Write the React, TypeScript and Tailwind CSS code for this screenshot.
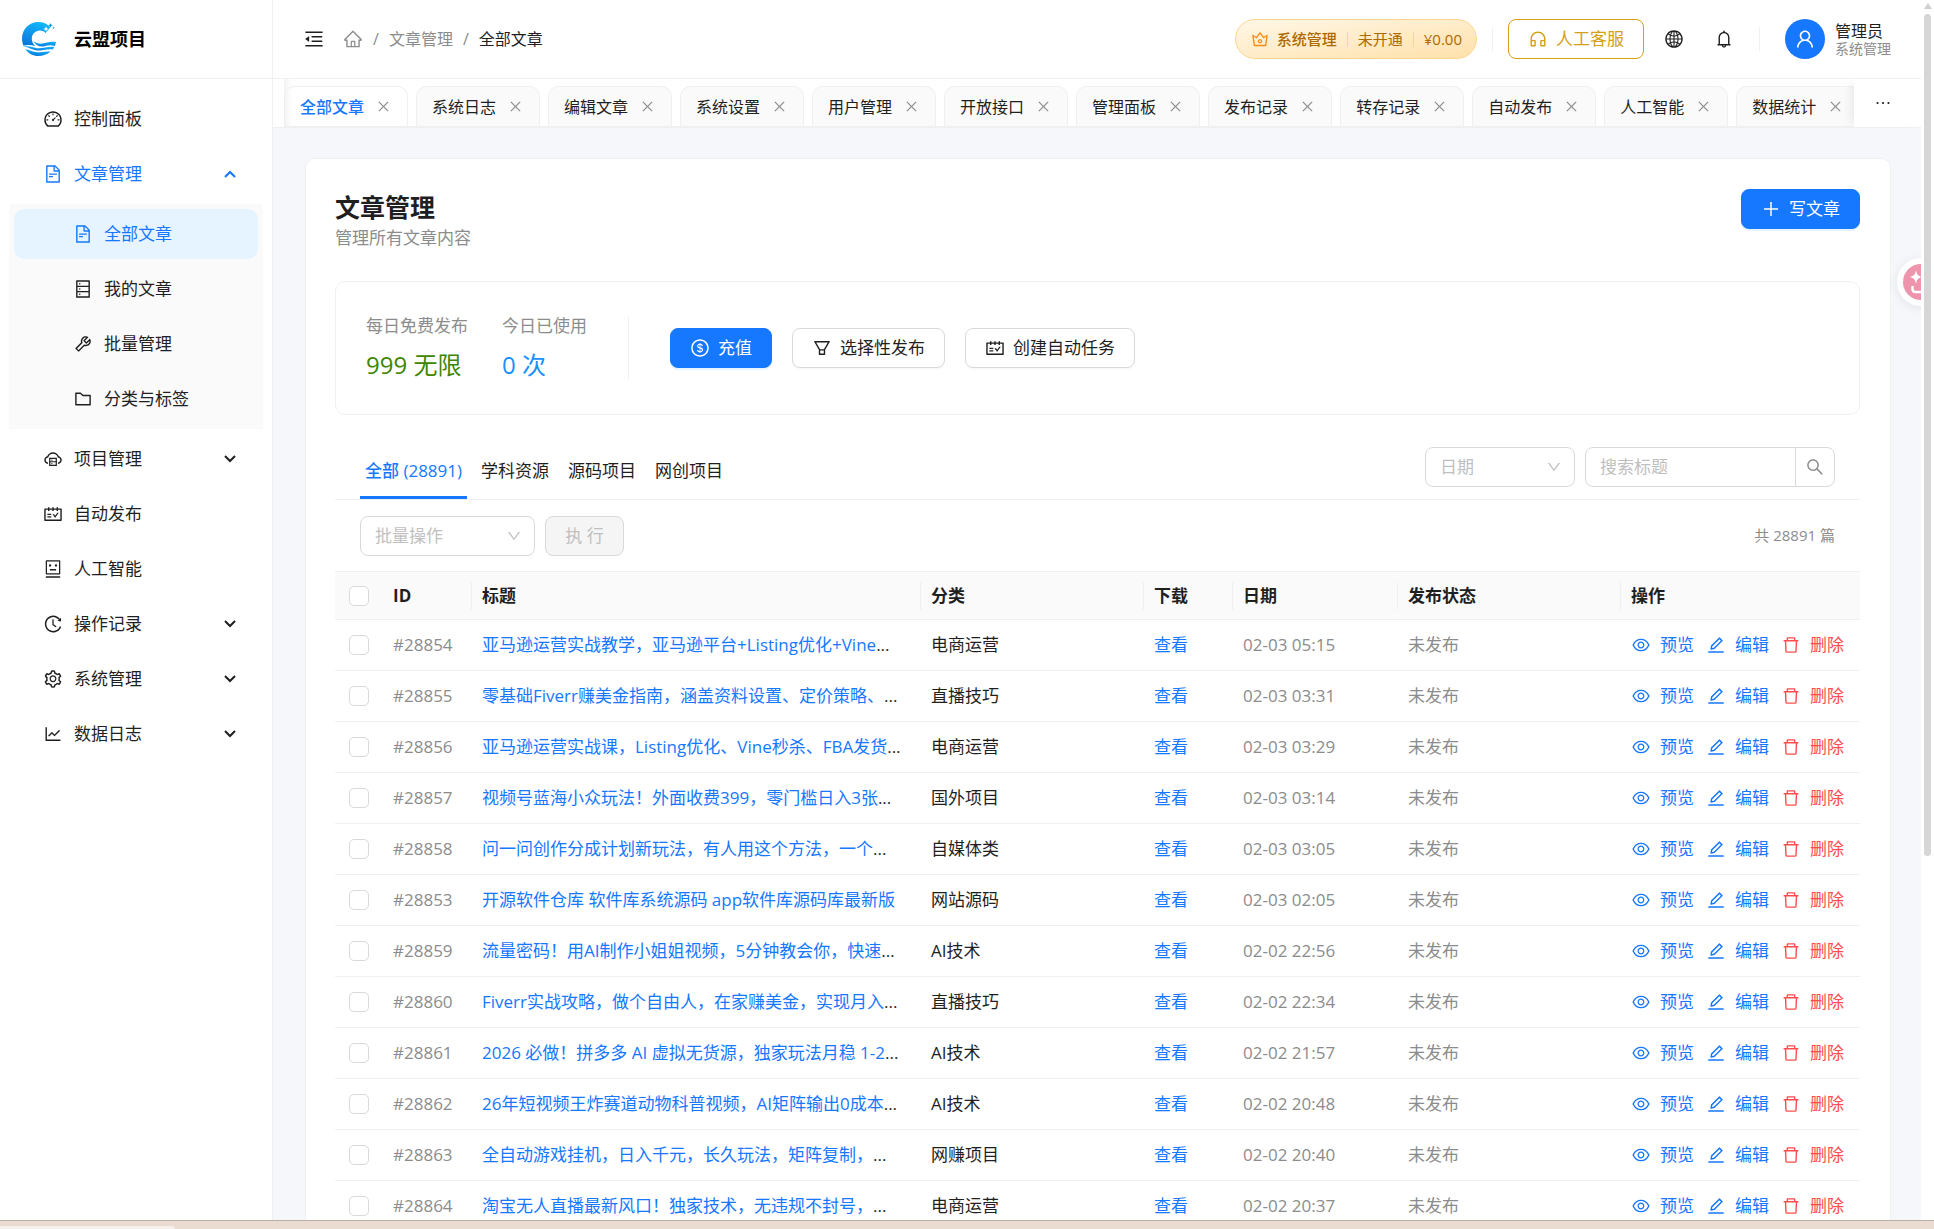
import type { ReactNode } from "react";
import type { IconType } from "react-icons";
import {
  AiOutlineBell,
  AiOutlineClose,
  AiOutlineCloudServer,
  AiOutlineCrown,
  AiOutlineCustomerService,
  AiOutlineDashboard,
  AiOutlineDatabase,
  AiOutlineDelete,
  AiOutlineDollarCircle,
  AiOutlineDown,
  AiOutlineEdit,
  AiOutlineEllipsis,
  AiOutlineEye,
  AiOutlineFileText,
  AiOutlineFilter,
  AiOutlineFolder,
  AiOutlineGlobal,
  AiOutlineHistory,
  AiOutlineHome,
  AiOutlineLineChart,
  AiOutlineMenuFold,
  AiOutlinePlus,
  AiOutlineRobot,
  AiOutlineSchedule,
  AiOutlineSearch,
  AiOutlineSetting,
  AiOutlineTool,
  AiOutlineUser,
} from "react-icons/ai";

type MenuItem = {
  label: string;
  icon: IconType;
  arrow?: boolean;
  open?: boolean;
  children?: { label: string; icon: IconType; active?: boolean }[];
};

const menu: MenuItem[] = [
  { label: "控制面板", icon: AiOutlineDashboard },
  {
    label: "文章管理",
    icon: AiOutlineFileText,
    arrow: true,
    open: true,
    children: [
      { label: "全部文章", icon: AiOutlineFileText, active: true },
      { label: "我的文章", icon: AiOutlineDatabase },
      { label: "批量管理", icon: AiOutlineTool },
      { label: "分类与标签", icon: AiOutlineFolder },
    ],
  },
  { label: "项目管理", icon: AiOutlineCloudServer, arrow: true },
  { label: "自动发布", icon: AiOutlineSchedule },
  { label: "人工智能", icon: AiOutlineRobot },
  { label: "操作记录", icon: AiOutlineHistory, arrow: true },
  { label: "系统管理", icon: AiOutlineSetting, arrow: true },
  { label: "数据日志", icon: AiOutlineLineChart, arrow: true },
];

const pageTabs = [
  "全部文章",
  "系统日志",
  "编辑文章",
  "系统设置",
  "用户管理",
  "开放接口",
  "管理面板",
  "发布记录",
  "转存记录",
  "自动发布",
  "人工智能",
  "数据统计",
];

const articles = [
  { id: 28854, title: "亚马逊运营实战教学，亚马逊平台+Listing优化+Vine", cut: true, category: "电商运营", date: "02-03 05:15" },
  { id: 28855, title: "零基础Fiverr赚美金指南，涵盖资料设置、定价策略、", cut: true, category: "直播技巧", date: "02-03 03:31" },
  { id: 28856, title: "亚马逊运营实战课，Listing优化、Vine秒杀、FBA发货", cut: true, category: "电商运营", date: "02-03 03:29" },
  { id: 28857, title: "视频号蓝海小众玩法！外面收费399，零门槛日入3张", cut: true, category: "国外项目", date: "02-03 03:14" },
  { id: 28858, title: "问一问创作分成计划新玩法，有人用这个方法，一个", cut: true, category: "自媒体类", date: "02-03 03:05" },
  { id: 28853, title: "开源软件仓库 软件库系统源码 app软件库源码库最新版", cut: false, category: "网站源码", date: "02-03 02:05" },
  { id: 28859, title: "流量密码！用AI制作小姐姐视频，5分钟教会你，快速", cut: true, category: "AI技术", date: "02-02 22:56" },
  { id: 28860, title: "Fiverr实战攻略，做个自由人，在家赚美金，实现月入", cut: true, category: "直播技巧", date: "02-02 22:34" },
  { id: 28861, title: "2026 必做！拼多多 AI 虚拟无货源，独家玩法月稳 1-2", cut: true, category: "AI技术", date: "02-02 21:57" },
  { id: 28862, title: "26年短视频王炸赛道动物科普视频，AI矩阵输出0成本", cut: true, category: "AI技术", date: "02-02 20:48" },
  { id: 28863, title: "全自动游戏挂机，日入千元，长久玩法，矩阵复制，", cut: true, category: "网赚项目", date: "02-02 20:40" },
  { id: 28864, title: "淘宝无人直播最新风口！独家技术，无违规不封号，", cut: true, category: "电商运营", date: "02-02 20:37" },
];

function Logo() {
  return (
    <svg viewBox="0 0 34 34" className="size-[34px]" aria-hidden="true">
      <defs>
        <linearGradient id="logo-blue" x1="0.7" y1="0" x2="0.3" y2="1">
          <stop offset="0" stopColor="#12b8fb" />
          <stop offset="1" stopColor="#0a78dc" />
        </linearGradient>
      </defs>
      <g fill="url(#logo-blue)">
        <path d="M28.500 5.200C25.200 1.800 21 0 16.500 0 7.200 0 0 7.300 0 16.600c0 2.800.5 5.200 1.500 7.200 3.600-1.200 7.200-.8 12 .2-2.500-2-3.700-4.300-3.700-7.200 0-4.600 3.500-8.200 8-8.200 2.300 0 4.200.8 5.700 2.300z" />
        <path d="M11 19c4.500 3.400 9 3 13 1.800 3.300-1 6.700-1.600 10-.8-.2 1.500-.6 2.800-1.100 3.900-4-1.200-7.100-.5-10.400.3-4.200 1-8.200-.2-11.500-5.200z" />
        <path d="M2 24.800c4.500-1.400 8.500.8 12.800 1.400 6 .8 11.200-2.200 17.500-1.200-.5 1-1 1.800-1.600 2.600-5.200-1-9.500 1.400-15.300.9-5-.4-8-3.100-13.400-3.700z" />
        <path d="M3.400 27.200c4.200.6 6.900 2.700 11.600 3 4.300.3 8-1.300 13.600-.6C25.300 32.600 21 34 16.400 34c-5.600 0-10.200-2.600-13-6.800z" />
        <path d="M28.500 1l.7 1.600 1.600.7-1.600.7-.7 1.600-.7-1.600-1.600-.7 1.600-.7z" />
        <path d="M31.500 4.500l.4 1 1 .4-1 .4-.4 1-.4-1-1-.4 1-.4z" />
      </g>
      <path d="M24 4.300l.8 1.900 1.900.8-1.900.8-.8 1.900-.8-1.900-1.900-.8 1.900-.8z" fill="#fff" />
    </svg>
  );
}

function Arrow({ open }: { open?: boolean }) {
  return (
    <svg
      viewBox="0 0 12 8"
      className="ml-auto h-2 w-3"
      fill="none"
      stroke="currentColor"
      strokeWidth="2"
      aria-hidden="true"
    >
      <path d={open ? "M1 7l5-5 5 5" : "M1 1l5 5 5-5"} />
    </svg>
  );
}

function Sidebar() {
  return (
    <aside className="flex w-[273px] shrink-0 flex-col border-r border-[#f0f0f0] bg-white">
      <a href="#home" className="flex h-[79px] shrink-0 items-center gap-[18px] border-b border-[#f0f0f0] pl-[22px]">
        <Logo />
        <span className="text-[18px] font-bold text-black">云盟项目</span>
      </a>
      <nav aria-label="主菜单" className="px-[9px] py-[15px]">
        <ul className="flex flex-col gap-[5px]">
          {menu.map((item) => (
            <li key={item.label}>
              <button
                type="button"
                className={`flex h-[50px] w-full items-center gap-[11px] pr-[27px] pl-[34px] ${item.open ? "text-[#1677ff]" : ""}`}
              >
                <item.icon className="size-5" />
                {item.label}
                {item.arrow && <Arrow open={item.open} />}
              </button>
              {item.children && (
                <ul className="mt-[5px] flex flex-col gap-[5px] bg-[#fafafa] p-[5px]">
                  {item.children.map((child) => (
                    <li key={child.label}>
                      <a
                        href="#articles"
                        className={`flex h-[50px] items-center gap-[11px] rounded-[10px] pl-[59px] ${
                          child.active ? "bg-[#e6f4ff] text-[#1677ff]" : ""
                        }`}
                      >
                        <child.icon className="size-5" />
                        {child.label}
                      </a>
                    </li>
                  ))}
                </ul>
              )}
            </li>
          ))}
        </ul>
      </nav>
    </aside>
  );
}

function Header() {
  return (
    <header className="flex h-[79px] shrink-0 items-center border-b border-[#f0f0f0] bg-white px-[30px]">
      <button type="button" aria-label="收起菜单">
        <AiOutlineMenuFold className="size-[22px]" />
      </button>
      <nav aria-label="面包屑" className="ml-[18px] flex items-center gap-[10px] text-[16px] text-[#8c8c8c]">
        <a href="#home" aria-label="首页">
          <AiOutlineHome className="size-5" />
        </a>
        <span>/</span>
        <a href="#articles">文章管理</a>
        <span>/</span>
        <span className="text-[#1f1f1f]">全部文章</span>
      </nav>

      <div className="ml-auto flex items-center">
        <div className="flex h-10 items-center rounded-full border border-[#ffd591] bg-linear-to-br from-[#fff7e6] to-[#ffe1ab] px-[14px] text-[15px] text-[#ad6800]">
          <AiOutlineCrown className="size-5 text-[#fa8c16]" />
          <span className="ml-[7px] font-medium">系统管理</span>
          <span className="mx-[10px] h-[15px] w-px bg-[#ffd591]" />
          <span>未开通</span>
          <span className="mx-[10px] h-[15px] w-px bg-[#ffd591]" />
          <span>¥0.00</span>
        </div>
        <span className="mx-[15px] h-6 w-px bg-[#f0f0f0]" />
        <button
          type="button"
          className="flex h-10 items-center gap-2 rounded-lg border border-[#d4a017] px-[19px] text-[#d4a017]"
        >
          <AiOutlineCustomerService className="size-5" />
          人工客服
        </button>
        <button type="button" aria-label="语言" className="flex h-10 w-[60px] items-center justify-center">
          <AiOutlineGlobal className="size-5" />
        </button>
        <button type="button" aria-label="通知" className="flex h-10 w-10 items-center justify-center">
          <AiOutlineBell className="size-5" />
        </button>
        <span className="mr-[25px] ml-[15px] h-6 w-px bg-[#f0f0f0]" />
        <div className="flex items-center gap-[10px]">
          <span className="flex size-10 items-center justify-center rounded-full bg-[#1677ff] text-white">
            <AiOutlineUser className="size-[22px]" />
          </span>
          <div className="flex flex-col">
            <span className="text-[16px] leading-5">管理员</span>
            <span className="text-[14px] leading-4 text-[#8c8c8c]">系统管理</span>
          </div>
        </div>
      </div>
    </header>
  );
}

function PageTabs() {
  return (
    <div className="flex h-[49px] shrink-0 border-b border-[#f0f0f0] bg-white pl-[11px]">
      <div className="flex min-w-0 flex-1 items-end gap-2 overflow-hidden border-b border-[#f0f0f0] shadow-[inset_10px_0_8px_-8px_rgba(0,0,0,0.08)]">
        {pageTabs.map((tab, i) => (
          <div
            key={tab}
            className={`flex h-10 shrink-0 items-center gap-3 rounded-t-[10px] border border-b-0 border-[#f0f0f0] px-[15px] text-[16px] ${
              i === 0 ? "font-medium text-[#1677ff]" : "bg-[#fafafa]"
            }`}
          >
            <a href="#tab">{tab}</a>
            <button type="button" aria-label={`关闭${tab}`} className="pr-px">
              <AiOutlineClose className="size-[15px] text-[#8c8c8c]" />
            </button>
          </div>
        ))}
      </div>
      <button
        type="button"
        aria-label="更多标签"
        className="z-10 flex w-[67px] shrink-0 items-center justify-center bg-white pr-[10px] shadow-[-8px_0_8px_-4px_rgba(0,0,0,0.06)]"
      >
        <AiOutlineEllipsis className="size-5" />
      </button>
    </div>
  );
}

function Button({ icon: Icon, primary, children }: { icon: IconType; primary?: boolean; children: ReactNode }) {
  return (
    <button
      type="button"
      className={`flex h-10 items-center gap-2 rounded-lg border px-[19px] ${
        primary
          ? "border-[#1677ff] bg-[#1677ff] text-white shadow-[0_2px_0_rgba(5,145,255,0.1)]"
          : "border-[#d9d9d9] bg-white shadow-[0_2px_0_rgba(0,0,0,0.02)]"
      }`}
    >
      <Icon className="size-5" />
      {children}
    </button>
  );
}

function Select({ label, className }: { label: string; className: string }) {
  return (
    <div className={`relative ${className}`}>
      <select
        aria-label={label}
        className="h-10 w-full appearance-none rounded-lg border border-[#d9d9d9] bg-white pl-[14px] text-[#bfbfbf]"
      >
        <option>{label}</option>
      </select>
      <AiOutlineDown className="pointer-events-none absolute top-3 right-[13px] size-4 text-[#bfbfbf]" />
    </div>
  );
}

function Checkbox({ label }: { label: string }) {
  return (
    <input
      type="checkbox"
      aria-label={label}
      className="mx-auto block size-5 appearance-none rounded-[5px] border border-[#d9d9d9] bg-white"
    />
  );
}

function HeadCell({ children, last }: { children: ReactNode; last?: boolean }) {
  return (
    <th className="p-0 text-left font-bold">
      <div className={`flex h-7 items-center pl-[10px] ${last ? "" : "border-r border-[#f0f0f0]"}`}>{children}</div>
    </th>
  );
}

function ArticleTable() {
  return (
    <table className="w-full table-fixed border-t border-[#f0f0f0]">
      <colgroup>
        <col className="w-[48px]" />
        <col className="w-[89px]" />
        <col />
        <col className="w-[223px]" />
        <col className="w-[89px]" />
        <col className="w-[165px]" />
        <col className="w-[223px]" />
        <col className="w-[239px]" />
      </colgroup>
      <thead>
        <tr className="h-12 border-b border-[#f0f0f0] bg-[#fafafa]">
          <th className="p-0">
            <Checkbox label="全选" />
          </th>
          <HeadCell>ID</HeadCell>
          <HeadCell>标题</HeadCell>
          <HeadCell>分类</HeadCell>
          <HeadCell>下载</HeadCell>
          <HeadCell>日期</HeadCell>
          <HeadCell>发布状态</HeadCell>
          <HeadCell last>操作</HeadCell>
        </tr>
      </thead>
      <tbody>
        {articles.map((a) => (
          <tr key={a.id} className="h-[51px] border-b border-[#f0f0f0]">
            <td className="p-0">
              <Checkbox label={`选择 #${a.id}`} />
            </td>
            <td className="pl-[10px] text-[#8c8c8c]">#{a.id}</td>
            <td className="overflow-hidden pl-[10px] whitespace-nowrap">
              <a href="#article" className="text-[#1677ff]">
                {a.title}
              </a>
              {a.cut && "..."}
            </td>
            <td className="pl-[10px]">{a.category}</td>
            <td className="pl-[10px]">
              <a href="#download" className="text-[#1677ff]">
                查看
              </a>
            </td>
            <td className="pl-[10px] text-[#8c8c8c]">{a.date}</td>
            <td className="pl-[10px] text-[#8c8c8c]">未发布</td>
            <td className="pl-[10px]">
              <div className="flex items-center gap-3 text-[#1677ff]">
                <button type="button" className="flex items-center gap-[9px]">
                  <AiOutlineEye className="size-5" />
                  预览
                </button>
                <button type="button" className="flex items-center gap-[9px]">
                  <AiOutlineEdit className="size-5" />
                  编辑
                </button>
                <button type="button" className="flex items-center gap-[9px] text-[#ff4d4f]">
                  <AiOutlineDelete className="size-5" />
                  删除
                </button>
              </div>
            </td>
          </tr>
        ))}
      </tbody>
    </table>
  );
}

function Articles() {
  return (
    <main className="min-h-0 flex-1 overflow-hidden bg-[#f5f7fb] pt-[30px] pr-[30px] pl-8">
      <section className="rounded-[10px] border border-[#f0f0f0] bg-white py-[30px] pr-[30px] pl-[29px]">
        <div className="flex items-start justify-between">
          <div>
            <h1 className="text-[25px] leading-9 font-bold">文章管理</h1>
            <p className="leading-[26px] text-[#8c8c8c]">管理所有文章内容</p>
          </div>
          <Button icon={AiOutlinePlus} primary>
            写文章
          </Button>
        </div>

        <div className="mt-[30px] flex h-[134px] items-center rounded-[10px] border border-[#f0f0f0] px-[30px]">
          <dl className="flex gap-[34px]">
            <div>
              <dt className="leading-[28px] text-[#8c8c8c]">每日免费发布</dt>
              <dd className="mt-[6px] text-[24px] leading-[38px] text-[#3f8600]">999 无限</dd>
            </div>
            <div>
              <dt className="leading-[28px] text-[#8c8c8c]">今日已使用</dt>
              <dd className="mt-[6px] text-[24px] leading-[38px] text-[#1890ff]">0 次</dd>
            </div>
          </dl>
          <span className="mx-[41px] h-[62px] w-px bg-[#f0f0f0]" />
          <div className="flex gap-5">
            <Button icon={AiOutlineDollarCircle} primary>
              充值
            </Button>
            <Button icon={AiOutlineFilter}>选择性发布</Button>
            <Button icon={AiOutlineSchedule}>创建自动任务</Button>
          </div>
        </div>

        <div className="mt-[25px] flex h-[60px] items-center border-b border-[#f0f0f0] px-[25px]">
          <div role="tablist" className="flex h-full items-end">
            <button
              type="button"
              role="tab"
              aria-selected="true"
              className="h-[58px] border-b-3 border-[#1677ff] px-[5px] pt-1 font-medium text-[#1677ff]"
            >
              全部 (28891)
            </button>
            {["学科资源", "源码项目", "网创项目"].map((tab) => (
              <button
                key={tab}
                type="button"
                role="tab"
                aria-selected="false"
                className="ml-[9px] h-[58px] border-b-3 border-transparent px-[5px] pt-1"
              >
                {tab}
              </button>
            ))}
          </div>
          <div className="ml-auto flex gap-[10px] pb-[5px]">
            <Select label="日期" className="w-[150px]" />
            <div className="flex h-10 w-[250px] rounded-lg border border-[#d9d9d9]">
              <input
                type="search"
                aria-label="搜索标题"
                placeholder="搜索标题"
                className="min-w-0 flex-1 pl-[14px] outline-none placeholder:text-[#bfbfbf]"
              />
              <button
                type="button"
                aria-label="搜索"
                className="flex w-[39px] items-center justify-center border-l border-[#d9d9d9] text-[#8c8c8c]"
              >
                <AiOutlineSearch className="size-5" />
              </button>
            </div>
          </div>
        </div>

        <div className="flex h-[71px] items-center gap-[10px] px-[25px]">
          <Select label="批量操作" className="w-[175px]" />
          <button
            type="button"
            disabled
            className="h-10 w-[79px] rounded-lg border border-[#d9d9d9] bg-[#f5f5f5] text-[#bfbfbf]"
          >
            执 行
          </button>
          <span className="ml-auto text-[15px] text-[#8c8c8c]">共 28891 篇</span>
        </div>

        <ArticleTable />
      </section>
    </main>
  );
}

function Assistant() {
  return (
    <button
      type="button"
      aria-label="助手"
      className="absolute top-[258px] -right-6 z-10 flex size-12 items-center justify-center rounded-full bg-white shadow-[0_2px_12px_rgba(0,0,0,0.08)]"
    >
      <svg viewBox="0 0 36 36" className="size-9" aria-hidden="true">
        <circle cx="18" cy="18" r="18" fill="#ee94ad" />
        <path d="M13 6c.8 4.500 2 6 6 7-4 1-5.200 2.500-6 7-.8-4.500-2-6-6-7 4-1 5.200-2.500 6-7z" fill="#fff" />
        <path d="M9.500 22v3c0 2 1 3 3 3h11" fill="none" stroke="#fff" strokeWidth="2.500" />
      </svg>
    </button>
  );
}

function ScrollRail() {
  return (
    <div className="flex w-[13px] shrink-0 flex-col bg-white pl-[3px]" aria-hidden="true">
      <svg viewBox="0 0 8 6" className="mt-[3px] mb-[5px] h-[6px] w-2" fill="#cfcfcf">
        <path d="M4 0l4 6H0z" />
      </svg>
      <div className="h-[69%] w-[7px] rounded-full bg-[#d6d6d6]" />
    </div>
  );
}

export default function App() {
  return (
    <div className="flex h-screen flex-col overflow-hidden bg-white font-['Open_Sans','Noto_Sans_CJK_SC',sans-serif] text-[17px] text-[#1f1f1f]">
      <div className="flex min-h-0 flex-1">
        <Sidebar />
        <div className="relative flex min-w-0 flex-1 flex-col overflow-hidden">
          <Header />
          <PageTabs />
          <Articles />
          <Assistant />
        </div>
        <ScrollRail />
      </div>
      <footer className="flex h-[9px] shrink-0 items-end border-t border-[#b9afaa] bg-[#ebdcd2]">
        <span className="h-[3px] w-[175px] rounded-tr bg-[#f7f0ea]" />
      </footer>
    </div>
  );
}
